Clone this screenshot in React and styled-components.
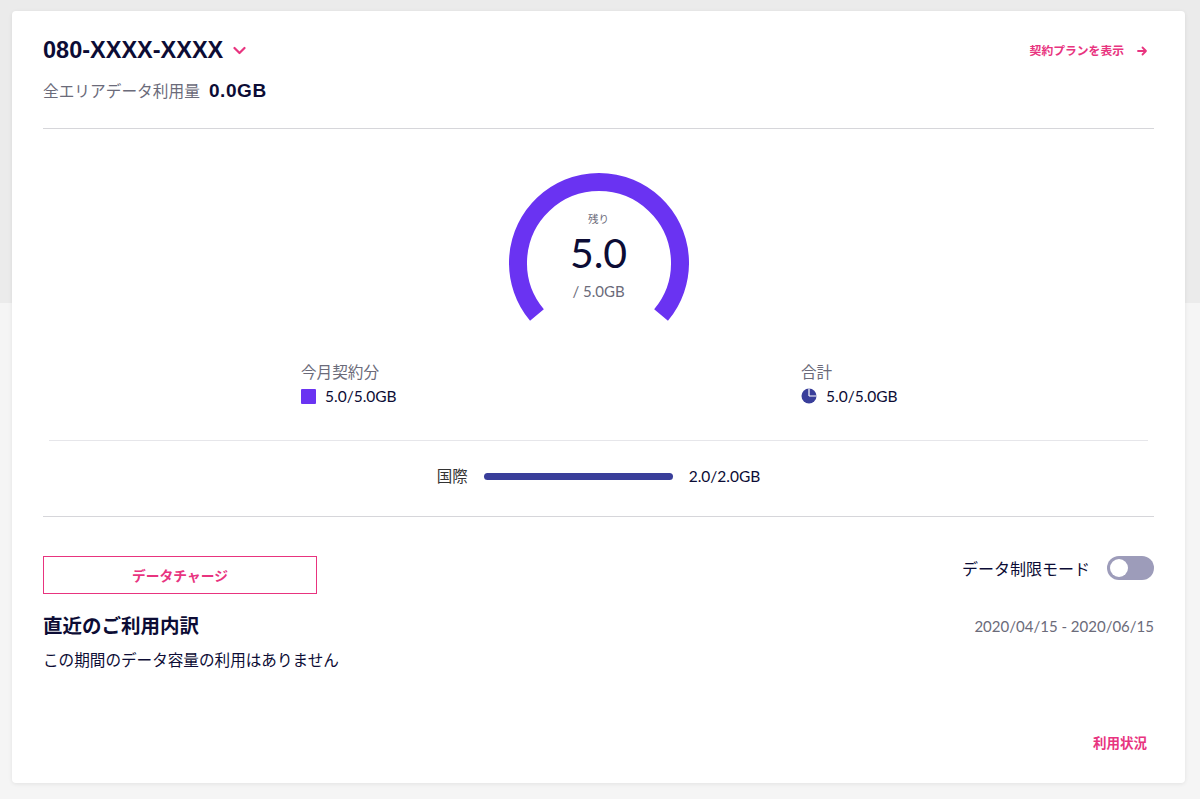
import React from 'react';
import styled, { createGlobalStyle } from 'styled-components';

const PINK = '#e8347f';
const NAVY = '#0c0c35';
const GRAY = '#6b6b7a';
const PURPLE = '#6a33f2';
const BLUE = '#393e9a';
const FONT = '"Lato", "Noto Sans CJK JP", sans-serif';

const GlobalStyle = createGlobalStyle`
  html, body {
    margin: 0;
    padding: 0;
  }
  body {
    font-family: ${FONT};
    color: ${NAVY};
    background: linear-gradient(to bottom, #ebebeb 0, #ebebeb 303px, #f5f5f5 303px);
    min-height: 799px;
  }
  #root {
    padding: 11px 15px 16px 12px;
  }
`;

const Card = styled.div`
  box-sizing: border-box;
  height: 772px;
  background: #fff;
  border-radius: 4px;
  box-shadow: 0 1px 4px rgba(0, 0, 0, 0.08);
  padding: 25px 31px 30px 31px;
  display: flex;
  flex-direction: column;
`;

const Header = styled.div`
  display: flex;
  justify-content: space-between;
  align-items: flex-start;
  padding-bottom: 25px;
  border-bottom: 1px solid #d6d6da;
`;

const TitleRow = styled.div`
  display: flex;
  align-items: center;
  gap: 10px;
  height: 28px;
`;

const Phone = styled.h1`
  margin: 0;
  font-family: "Liberation Sans", Arial, sans-serif;
  font-size: 23.5px;
  line-height: 28px;
  font-weight: 700;
  color: ${NAVY};
`;

const UsageRow = styled.div`
  display: flex;
  align-items: baseline;
  gap: 9px;
  margin-top: 15px;
  line-height: 24px;
`;

const UsageLabel = styled.span`
  font-size: 15.7px;
  color: ${GRAY};
`;

const UsageValue = styled.span`
  font-family: "Liberation Sans", Arial, sans-serif;
  font-size: 19px;
  font-weight: 700;
  letter-spacing: 0.6px;
  color: ${NAVY};
`;

const PlanLink = styled.a`
  display: flex;
  align-items: center;
  gap: 13px;
  margin-top: 5px;
  margin-right: 6px;
  font-size: 11.8px;
  line-height: 20px;
  font-weight: 700;
  color: ${PINK};
  text-decoration: none;
`;

const GaugeWrap = styled.div`
  position: relative;
  width: 180px;
  height: 160px;
  margin: 44px auto 0;
`;

const GaugeText = styled.div`
  position: absolute;
  left: 0;
  right: 0;
  top: 39px;
  display: flex;
  flex-direction: column;
  align-items: center;
`;

const Remain = styled.span`
  font-size: 10.5px;
  line-height: 14px;
  color: ${GRAY};
`;

const BigNum = styled.span`
  font-size: 41px;
  line-height: 48px;
  margin-top: 3px;
  color: ${NAVY};
`;

const Total = styled.span`
  font-size: 15px;
  line-height: 20px;
  margin-top: 4px;
  color: ${GRAY};
`;

const Legend = styled.div`
  display: grid;
  grid-template-columns: 500px 1fr;
  padding-left: 258px;
  margin-top: 29px;
`;

const LegendItem = styled.div`
  display: flex;
  flex-direction: column;
  gap: 4px;
`;

const LegendLabel = styled.span`
  font-size: 15.6px;
  line-height: 20px;
  color: ${GRAY};
`;

const LegendValue = styled.span`
  display: flex;
  align-items: center;
  gap: 9px;
  font-size: 15.5px;
  line-height: 20px;
  color: ${NAVY};
`;

const Swatch = styled.span`
  width: 15px;
  height: 15px;
  border-radius: 1px;
  background: ${PURPLE};
`;

const InnerDivider = styled.hr`
  margin: 34px 6px 0;
  border: 0;
  border-top: 1px solid #e6e6ea;
`;

const IntlRow = styled.div`
  display: flex;
  align-items: center;
  justify-content: center;
  gap: 16px;
  padding: 25px 0 30px;
  border-bottom: 1px solid #d6d6da;
  line-height: 20px;
  font-size: 15.5px;
`;

const IntlLabel = styled.span`
  color: #333;
`;

const Bar = styled.div`
  width: 189px;
  height: 7px;
  border-radius: 4px;
  background: ${BLUE};
`;

const IntlValue = styled.span`
  color: ${NAVY};
`;

const ActionRow = styled.div`
  display: flex;
  justify-content: space-between;
  align-items: flex-start;
  margin-top: 39px;
`;

const ChargeButton = styled.button`
  box-sizing: border-box;
  width: 274px;
  height: 38px;
  background: #fff;
  border: 1px solid ${PINK};
  border-radius: 0;
  font-family: ${FONT};
  font-size: 13.8px;
  font-weight: 700;
  color: ${PINK};
  padding: 0;
`;

const LimitMode = styled.label`
  display: flex;
  align-items: center;
  gap: 17px;
  font-size: 16px;
  color: ${NAVY};
  height: 24px;
`;

const Toggle = styled.span`
  position: relative;
  width: 47px;
  height: 24px;
  border-radius: 12px;
  background: #9d9cba;

  &::after {
    content: '';
    position: absolute;
    left: 3px;
    top: 3px;
    width: 18px;
    height: 18px;
    border-radius: 50%;
    background: #fff;
  }
`;

const HistoryHead = styled.div`
  display: flex;
  justify-content: space-between;
  align-items: center;
  margin-top: 19px;
`;

const HistoryTitle = styled.h2`
  margin: 0;
  font-size: 19.5px;
  line-height: 26px;
  font-weight: 700;
  color: ${NAVY};
`;

const Period = styled.span`
  font-size: 15px;
  color: ${GRAY};
`;

const Empty = styled.p`
  margin: 10px 0 0;
  font-size: 15.6px;
  line-height: 22px;
  color: ${NAVY};
`;

const Footer = styled.div`
  margin-top: auto;
  display: flex;
  justify-content: flex-end;
  padding-right: 7px;
`;

const FooterLink = styled.a`
  font-size: 13.5px;
  line-height: 20px;
  font-weight: 700;
  color: ${PINK};
  text-decoration: none;
`;

const Chevron = () => (
  <svg width="13" height="9" viewBox="0 0 13 9">
    <polyline points="1.5,2 6.5,7 11.5,2" fill="none" stroke={PINK} strokeWidth="2.2" strokeLinecap="round" strokeLinejoin="round" />
  </svg>
);

const Arrow = () => (
  <svg width="11" height="10" viewBox="0 0 11 10">
    <path d="M1 5h8M5.5 1.5L9 5 5.5 8.5" fill="none" stroke={PINK} strokeWidth="1.8" strokeLinecap="round" strokeLinejoin="round" />
  </svg>
);

const PieIcon = () => (
  <svg width="16" height="16" viewBox="0 0 16 16">
    <circle cx="8" cy="8" r="7.5" fill={BLUE} />
    <path d="M8 8V0.5M8 8h7.5" stroke="#fff" strokeWidth="1.2" />
  </svg>
);

const polar = (cx, cy, r, deg) => {
  const a = (deg * Math.PI) / 180;
  return [cx + r * Math.cos(a), cy - r * Math.sin(a)];
};

const Gauge = ({ remain, total }) => {
  const cx = 90;
  const cy = 90;
  const r = 81;
  const start = polar(cx, cy, r, 220);
  const end = polar(cx, cy, r, -40);
  const d = `M${start[0]} ${start[1]} A${r} ${r} 0 1 1 ${end[0]} ${end[1]}`;
  return (
    <GaugeWrap>
      <svg width="180" height="160" viewBox="0 0 180 160">
        <path d={d} fill="none" stroke={PURPLE} strokeWidth="18" />
      </svg>
      <GaugeText>
        <Remain>残り</Remain>
        <BigNum>{remain}</BigNum>
        <Total>/ {total}</Total>
      </GaugeText>
    </GaugeWrap>
  );
};

const App = () => (
  <>
    <GlobalStyle />
    <Card>
      <Header>
        <div>
          <TitleRow>
            <Phone>080-XXXX-XXXX</Phone>
            <Chevron />
          </TitleRow>
          <UsageRow>
            <UsageLabel>全エリアデータ利用量</UsageLabel>
            <UsageValue>0.0GB</UsageValue>
          </UsageRow>
        </div>
        <PlanLink href="#">
          契約プランを表示
          <Arrow />
        </PlanLink>
      </Header>

      <Gauge remain="5.0" total="5.0GB" />

      <Legend>
        <LegendItem>
          <LegendLabel>今月契約分</LegendLabel>
          <LegendValue><Swatch />5.0/5.0GB</LegendValue>
        </LegendItem>
        <LegendItem>
          <LegendLabel>合計</LegendLabel>
          <LegendValue><PieIcon />5.0/5.0GB</LegendValue>
        </LegendItem>
      </Legend>

      <InnerDivider />

      <IntlRow>
        <IntlLabel>国際</IntlLabel>
        <Bar />
        <IntlValue>2.0/2.0GB</IntlValue>
      </IntlRow>

      <ActionRow>
        <ChargeButton>データチャージ</ChargeButton>
        <LimitMode>
          データ制限モード
          <Toggle />
        </LimitMode>
      </ActionRow>

      <HistoryHead>
        <HistoryTitle>直近のご利用内訳</HistoryTitle>
        <Period>2020/04/15 - 2020/06/15</Period>
      </HistoryHead>
      <Empty>この期間のデータ容量の利用はありません</Empty>

      <Footer>
        <FooterLink href="#">利用状況</FooterLink>
      </Footer>
    </Card>
  </>
);

export default App;
